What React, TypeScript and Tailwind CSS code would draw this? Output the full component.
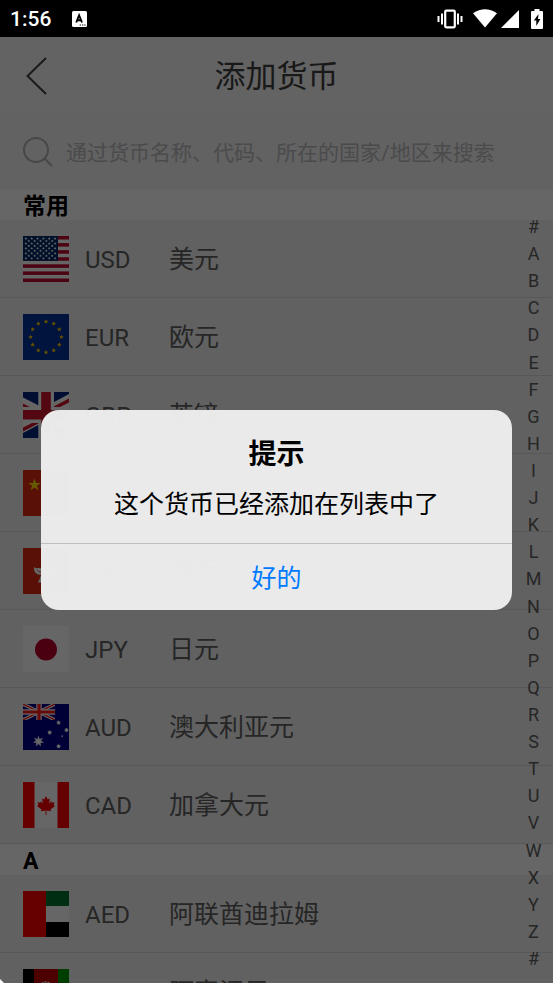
import type { ReactNode } from 'react';

type Currency = { code: string; name: string; flag: ReactNode };

function star(cx: number, cy: number, r: number, points = 5, inner = 0.4) {
  return Array.from({ length: points * 2 }, (_, i) => {
    const radius = i % 2 === 0 ? r : r * inner;
    const angle = (Math.PI * i) / points - Math.PI / 2;
    return `${(cx + radius * Math.cos(angle)).toFixed(2)},${(cy + radius * Math.sin(angle)).toFixed(2)}`;
  }).join(' ');
}

function Flag({ children }: { children: ReactNode }) {
  return (
    <svg viewBox="0 0 46 46" className="size-[46px] shrink-0" aria-hidden="true">
      {children}
    </svg>
  );
}

const usFlag = (
  <Flag>
    <rect width="46" height="46" fill="#fff" />
    {[0, 1, 2, 3, 4, 5, 6].map((i) => (
      <rect key={i} y={i * 7.08} width="46" height="3.54" fill="#bf0a30" />
    ))}
    <rect width="35" height="24.8" fill="#002868" />
    {Array.from({ length: 9 }, (_, r) =>
      Array.from({ length: r % 2 ? 5 : 6 }, (_, c) => (
        <polygon
          key={`${r}-${c}`}
          points={star(2.9 + c * 5.84 + (r % 2 ? 2.92 : 0), 2.5 + r * 2.48, 1.4, 5, 0.5)}
          fill="#fff"
        />
      )),
    )}
  </Flag>
);

const euFlag = (
  <Flag>
    <rect width="46" height="46" fill="#003399" />
    {Array.from({ length: 12 }, (_, i) => (
      <polygon
        key={i}
        points={star(23 + 15.4 * Math.sin((i * Math.PI) / 6), 23 - 15.4 * Math.cos((i * Math.PI) / 6), 2.4, 5, 0.45)}
        fill="#ffcc00"
      />
    ))}
  </Flag>
);

const gbFlag = (
  <Flag>
    <rect width="46" height="46" fill="#fff" />
    <path
      d="M0 0H15.3V13.3L0 5.5ZM31 0H46V2L31 10ZM46 46H31V32.7L46 40.5ZM15.3 46H0V41L15.3 33Z"
      fill="#00247d"
    />
    <path
      d="M0 11.5L7 15H0ZM46 6.5V10.5L37 15H31V14.2ZM46 34.5L39 31H46ZM0 39.5V35.5L9 31H15V31.8Z"
      fill="#cf142b"
    />
    <path d="M23 0V46M0 22.8H46" stroke="#cf142b" strokeWidth="9.6" />
  </Flag>
);

const cnFlag = (
  <Flag>
    <rect width="46" height="46" fill="#de2910" />
    <polygon points={star(11.5, 15, 6.5)} fill="#ffde00" />
    <polygon points={star(23, 7, 2.2)} fill="#ffde00" />
    <polygon points={star(27, 12, 2.2)} fill="#ffde00" />
    <polygon points={star(27, 18, 2.2)} fill="#ffde00" />
    <polygon points={star(23, 23, 2.2)} fill="#ffde00" />
  </Flag>
);

const hkFlag = (
  <Flag>
    <rect width="46" height="46" fill="#de2910" />
    {[0, 72, 144, 216, 288].map((a) => (
      <g key={a} transform={`rotate(${a} 23 24)`}>
        <path d="M23 24C17 21 16 13 24 11C22 15 28 17 23 24Z" fill="#fff" />
        <path d="M22.5 22C20.5 19 21 17 22 15" fill="none" stroke="#de2910" strokeWidth="0.7" />
      </g>
    ))}
  </Flag>
);

const jpFlag = (
  <Flag>
    <rect width="46" height="46" fill="#fff" />
    <circle cx="23" cy="23.5" r="11" fill="#bc002d" />
  </Flag>
);

const auFlag = (
  <Flag>
    <rect width="46" height="46" fill="#00008b" />
    <svg width="32" height="16" viewBox="0 0 32 16">
      <path d="M0 0L32 16M32 0L0 16" stroke="#fff" strokeWidth="3.4" />
      <path d="M0 0L32 16M32 0L0 16" stroke="#ff1a1a" strokeWidth="1.3" />
      <path d="M16 0V16M0 8H32" stroke="#fff" strokeWidth="5.4" />
      <path d="M16 0V16M0 8H32" stroke="#ff1a1a" strokeWidth="3.2" />
    </svg>
    <g fill="#fff">
      <polygon points={star(15.5, 37.3, 5.8, 7, 0.45)} />
      <polygon points={star(35.6, 18.7, 2.4, 7, 0.6)} />
      <polygon points={star(26.7, 28.5, 2.4, 7, 0.6)} />
      <polygon points={star(43.5, 26, 2.4, 7, 0.6)} />
      <polygon points={star(35.6, 42.3, 2.4, 7, 0.6)} />
      <polygon points={star(39.2, 32.2, 1.4)} />
    </g>
  </Flag>
);

const caFlag = (
  <Flag>
    <rect width="46" height="46" fill="#fff" />
    <path d="M0 0H11.5V46H0ZM34.5 0H46V46H34.5Z" fill="#f00" />
    <path
      d="M23 14L21.2 17.4L19 16.4L20 21.4L17.8 19.3L17.2 20.8L14.5 20.3L15.4 23.1L14 23.9L18.5 27.6L18 29.3L22.6 28.6L22.5 33H23.5L23.4 28.6L28 29.3L27.5 27.6L32 23.9L30.6 23.1L31.5 20.3L28.8 20.8L28.2 19.3L26 21.4L27 16.4L24.8 17.4Z"
      fill="#f00"
    />
  </Flag>
);

const aeFlag = (
  <Flag>
    <rect width="46" height="46" fill="#fff" />
    <rect x="23" width="23" height="15" fill="#00732f" />
    <rect x="23" y="31" width="23" height="15" fill="#000" />
    <rect width="23" height="46" fill="#f00" />
  </Flag>
);

const afFlag = (
  <Flag>
    <rect width="46" height="46" fill="#c00000" />
    <rect width="11" height="46" fill="#000" />
    <rect x="35" width="11" height="46" fill="#009900" />
    <circle cx="23" cy="21" r="8" fill="none" stroke="#fff" strokeWidth="1.4" strokeDasharray="2 1" />
    <path d="M18 24V19Q23 13 28 19V24Z" fill="#fff" opacity="0.7" />
  </Flag>
);

const sections: { title: string; items: Currency[] }[] = [
  {
    title: '常用',
    items: [
      { code: 'USD', name: '美元', flag: usFlag },
      { code: 'EUR', name: '欧元', flag: euFlag },
      { code: 'GBP', name: '英镑', flag: gbFlag },
      { code: 'CNY', name: '人民币', flag: cnFlag },
      { code: 'HKD', name: '港币', flag: hkFlag },
      { code: 'JPY', name: '日元', flag: jpFlag },
      { code: 'AUD', name: '澳大利亚元', flag: auFlag },
      { code: 'CAD', name: '加拿大元', flag: caFlag },
    ],
  },
  {
    title: 'A',
    items: [
      { code: 'AED', name: '阿联酋迪拉姆', flag: aeFlag },
      { code: 'AFN', name: '阿富汗尼', flag: afFlag },
    ],
  },
];

const indexKeys = '#ABCDEFGHIJKLMNOPQRSTUVWXYZ#'.split('');

function StatusBar() {
  return (
    <div className="flex h-[37px] shrink-0 items-center bg-black pl-[10px] pr-[10px] text-white">
      <span className="w-[62px] text-[21px] leading-6 font-medium">1:56</span>
      <svg viewBox="0 0 15 16" className="h-4 w-[15px]" aria-hidden="true">
        <rect width="15" height="16" rx="1.5" fill="#fff" />
        <path d="M4.2 11.5L7.1 4.2L10 11.5M5.2 9.2H9" fill="none" stroke="#000" strokeWidth="1.9" />
        <path d="M7.7 14H9M10 14H11.3M12.2 14H13.5" stroke="#000" strokeWidth="1.2" />
      </svg>
      <div className="ml-auto flex items-center">
        <svg viewBox="0 0 26 20" className="h-5 w-[26px]" aria-hidden="true">
          <rect x="8.2" y="1.7" width="9.6" height="16.6" rx="1" fill="none" stroke="#fff" strokeWidth="2.2" />
          <path d="M1.5 7V13M5 4.5V15.5M21 4.5V15.5M24.5 7V13" stroke="#fff" strokeWidth="2" />
        </svg>
        <svg viewBox="0 0 24 19" className="ml-[10px] h-[19px] w-6" aria-hidden="true">
          <path d="M0 4.2Q12 -3.6 24 4.2L12 18.5Z" fill="#fff" />
        </svg>
        <svg viewBox="0 0 18 18" className="ml-1 size-[18px]" aria-hidden="true">
          <path d="M18 0V18H0Z" fill="#fff" />
        </svg>
        <svg viewBox="0 0 12 20" className="ml-3 h-5 w-3" aria-hidden="true">
          <path d="M3.5 0H8.5V2H11Q12 2 12 3V19Q12 20 11 20H1Q0 20 0 19V3Q0 2 1 2H3.5Z" fill="#fff" />
          <path d="M7.5 5L2.8 11.5H5.3V17L9.4 10H7Z" fill="#000" />
        </svg>
      </div>
    </div>
  );
}

function CurrencyRow({ code, name, flag }: Currency) {
  return (
    <li className="h-[78px] border-b border-[#dcdcdc]">
      <button type="button" className="flex h-full w-full items-center pl-[23px] text-left text-[#606060]">
        {flag}
        <span className="ml-4 flex items-baseline pt-[3px] leading-8">
          <span className="w-[84px] text-[24px]">{code}</span>
          <span className="text-[25px]">{name}</span>
        </span>
      </button>
    </li>
  );
}

export default function App() {
  return (
    <div className="flex h-screen flex-col overflow-hidden font-['Roboto','Noto_Sans_CJK_SC',sans-serif]">
      <StatusBar />
      <div className="relative flex min-h-0 flex-1 flex-col bg-[#f2f2f2]">
        <header className="grid h-[77px] shrink-0 grid-cols-[72px_1fr_72px] items-center bg-[#f7f7f7]">
          <button type="button" aria-label="返回" className="flex h-full items-center pl-[26px]">
            <svg viewBox="0 0 22 38" className="h-[38px] w-[22px]" fill="none" stroke="#404040" strokeWidth="2">
              <path d="M20 1L1.5 19L20 37" />
            </svg>
          </button>
          <h1 className="pt-[2px] text-center text-[31px] leading-10 text-[#404040]">添加货币</h1>
        </header>
        <label className="flex h-[75px] shrink-0 items-center bg-[#f5f5f5] pl-[23px] pr-5">
          <svg viewBox="0 0 30 30" className="size-[30px] shrink-0" fill="none" stroke="#aeb4b4" strokeWidth="2" aria-hidden="true">
            <circle cx="13" cy="13" r="12" />
            <path d="M21.5 21.5L29 29" />
          </svg>
          <input
            type="search"
            aria-label="搜索货币"
            placeholder="通过货币名称、代码、所在的国家/地区来搜索"
            className="ml-[13px] min-w-0 flex-1 bg-transparent pt-[2px] text-[21px] leading-8 outline-none placeholder:text-[#bbbbbf]"
          />
        </label>
        <main className="min-h-0 flex-1 overflow-hidden">
          {sections.map((section) => (
            <section key={section.title}>
              <h2 className="h-[31px] bg-white pt-[2px] pl-[23px] text-[23px] leading-[31px] font-bold text-black">
                {section.title}
              </h2>
              <ul>
                {section.items.map((item) => (
                  <CurrencyRow key={item.code} {...item} />
                ))}
              </ul>
            </section>
          ))}
        </main>
        <nav
          aria-label="字母索引"
          className="absolute top-[177px] right-0 bottom-[11px] flex w-[39px] flex-col justify-between text-[18px] leading-[26px] text-[#606060]"
        >
          {indexKeys.map((key, i) => (
            <button key={i} type="button" className="text-center">
              {key}
            </button>
          ))}
        </nav>
        <div className="absolute inset-0 flex items-center justify-center bg-black/60">
          <div
            role="alertdialog"
            aria-labelledby="dialog-title"
            aria-describedby="dialog-message"
            className="w-[85%] rounded-[18px] bg-[#ececec]/99 text-center text-black"
          >
            <h2 id="dialog-title" className="pt-[27px] text-[28px] leading-9 font-bold">
              提示
            </h2>
            <p id="dialog-message" className="px-6 pt-4 pb-[22px] text-[25px] leading-8">
              这个货币已经添加在列表中了
            </p>
            <button
              type="button"
              className="h-[67px] w-full border-t border-[#bfbfbf] pt-[3px] text-[25px] leading-8 text-[#007aff]"
            >
              好的
            </button>
          </div>
        </div>
        <svg viewBox="0 0 4 4" className="absolute bottom-0 left-0 size-1" aria-hidden="true">
          <path d="M0 0L4 4H0Z" fill="#fff" />
        </svg>
      </div>
    </div>
  );
}
